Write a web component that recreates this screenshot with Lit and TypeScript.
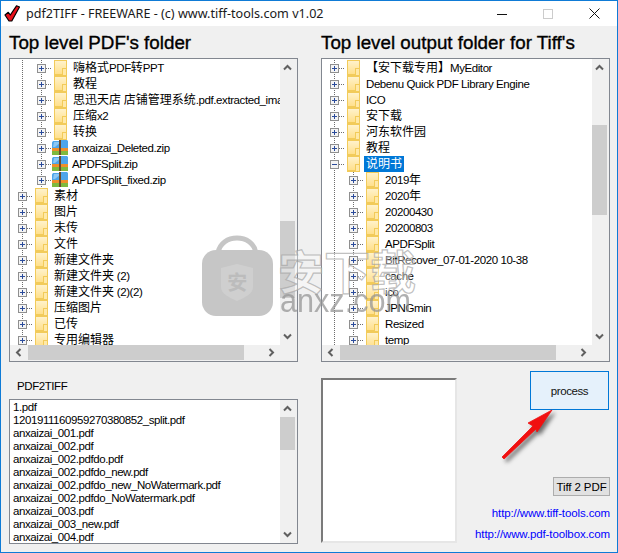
import { LitElement, html, css, svg } from "lit";
import { customElement } from "lit/decorators.js";

type Row = { label: string; level: number; icon?: "folder" | "zip"; open?: boolean; selected?: boolean };

const leftRows: Row[] = [
  { label: "嗨格式PDF转PPT", level: 2 },
  { label: "教程", level: 2 },
  { label: "思迅天店 店铺管理系统.pdf.extracted_images", level: 2 },
  { label: "压缩x2", level: 2 },
  { label: "转换", level: 2 },
  { label: "anxaizai_Deleted.zip", level: 2, icon: "zip" },
  { label: "APDFSplit.zip", level: 2, icon: "zip" },
  { label: "APDFSplit_fixed.zip", level: 2, icon: "zip" },
  { label: "素材", level: 1 },
  { label: "图片", level: 1 },
  { label: "未传", level: 1 },
  { label: "文件", level: 1 },
  { label: "新建文件夹", level: 1 },
  { label: "新建文件夹 (2)", level: 1 },
  { label: "新建文件夹 (2)(2)", level: 1 },
  { label: "压缩图片", level: 1 },
  { label: "已传", level: 1 },
  { label: "专用编辑器", level: 1 },
];

const rightRows: Row[] = [
  { label: "【安下载专用】MyEditor", level: 1 },
  { label: "Debenu Quick PDF Library Engine", level: 1 },
  { label: "ICO", level: 1 },
  { label: "安下载", level: 1 },
  { label: "河东软件园", level: 1 },
  { label: "教程", level: 1 },
  { label: "说明书", level: 1, open: true, selected: true },
  { label: "2019年", level: 2 },
  { label: "2020年", level: 2 },
  { label: "20200430", level: 2 },
  { label: "20200803", level: 2 },
  { label: "APDFSplit", level: 2 },
  { label: "BitRecover_07-01-2020 10-38", level: 2 },
  { label: "cache", level: 2 },
  { label: "ico", level: 2 },
  { label: "JPNGmin", level: 2 },
  { label: "Resized", level: 2 },
  { label: "temp", level: 2 },
];

const files = [
  "1.pdf",
  "1201911160959270380852_split.pdf",
  "anxaizai_001.pdf",
  "anxaizai_002.pdf",
  "anxaizai_002.pdfdo.pdf",
  "anxaizai_002.pdfdo_new.pdf",
  "anxaizai_002.pdfdo_new_NoWatermark.pdf",
  "anxaizai_002.pdfdo_NoWatermark.pdf",
  "anxaizai_003.pdf",
  "anxaizai_003_new.pdf",
  "anxaizai_004.pdf",
];

const chevron = (d: string) => html`<svg class="chev" width="9" height="7" viewBox="0 0 9 7"><path d=${d} fill="none" stroke="#606060" stroke-width="2"/></svg>`;
const chevUp = () => chevron("M1 5.5L4.5 2L8 5.5");
const chevDown = () => chevron("M1 1.5L4.5 5L8 1.5");
const chevLeft = () => html`<svg class="chev" width="7" height="9" viewBox="0 0 7 9"><path d="M5.5 1L2 4.5L5.5 8" fill="none" stroke="#606060" stroke-width="2"/></svg>`;
const chevRight = () => html`<svg class="chev" width="7" height="9" viewBox="0 0 7 9"><path d="M1.5 1L5 4.5L1.5 8" fill="none" stroke="#606060" stroke-width="2"/></svg>`;

const zipIcon = () => html`<svg class="zip" width="16" height="16" viewBox="0 0 16 16">
  ${svg`<path d="M0 2.5L1 1H7L8 0H15L16 1V8H0Z" fill="#4ea5ea"/>
  <path d="M2 2H9L3 7H1Z" fill="#8cc8f5"/>
  <rect x="0" y="8" width="16" height="3" fill="#ef8f2a"/>
  <rect x="0" y="11" width="16" height="4" fill="#7fb93e"/>
  <rect x="7" y="0" width="2" height="15" fill="#6a4a2c"/>`}
</svg>`;

const runs = (text: string) =>
  text.split(/([\u3000-\u9fff\uff00-\uffef]+)/).map((part) =>
    /[\u3000-\u9fff\uff00-\uffef]/.test(part) ? html`<span class="cjk">${part}</span>` : part
  );

@customElement("app-root")
export class AppRoot extends LitElement {
  static styles = css`
    :host { display: block; width: 618px; height: 553px; overflow: hidden; font-family: "Liberation Sans", "Noto Sans CJK SC", sans-serif; font-size: 11.5px; letter-spacing: -0.42px; color: #000; }
    * { box-sizing: border-box; }
    .app { position: relative; width: 618px; height: 553px; border: 1px solid #0f7bd6; display: flex; flex-direction: column; background: #f0f0f0; }
    .title { height: 25px; background: #fff; display: flex; align-items: center; padding-left: 3px; flex: none; }
    .title-text { margin-left: 6px; font-family: "Noto Sans", sans-serif; font-size: 12.6px; letter-spacing: 0; white-space: nowrap; color: #1a1a1a; }
    .controls { margin-left: auto; display: flex; align-items: center; }
    .ctl { width: 46px; height: 25px; display: flex; align-items: center; justify-content: center; }
    .body { flex: 1; display: grid; grid-template-columns: 289px 289px; grid-template-rows: 32px 304px 1fr; column-gap: 23px; padding-left: 8px; }
    h1 { margin: 0; font-weight: 400; font-size: 18.8px; letter-spacing: 0; line-height: 34px; white-space: nowrap; -webkit-text-stroke: 0.35px #000; }
    .box { border: 1px solid #828790; background: #fff; }
    .tree { display: grid; grid-template-columns: 1fr 17px; grid-template-rows: 1fr 16px; height: 304px; background: #f0f0f0; }
    .rows { background: #fff; padding: 1px 0 0 3px; overflow: hidden; min-width: 0; }
    .row { display: flex; height: 16px; white-space: nowrap; }
    .cell { width: 19px; height: 16px; flex: none; position: relative; }
    .cell::before { content: ""; position: absolute; left: 9px; top: 0; bottom: 0; width: 1px; background: repeating-linear-gradient(to bottom, #6d6d6d 0 1px, transparent 1px 2px); }
    .cell.exp::after { content: ""; position: absolute; left: 14px; top: 8px; width: 5px; height: 1px; background: repeating-linear-gradient(to right, #6d6d6d 0 1px, transparent 1px 2px); }
    .sign { position: absolute; left: 5px; top: 4px; width: 9px; height: 9px; z-index: 1; display: block; }
    .folder { width: 13px; height: 16px; margin-left: 3px; flex: none; position: relative; border: 1px solid #f2cb5a; border-bottom-width: 2px; background: linear-gradient(#fff2cb, #ffe08c); }
    .folder::after { content: ""; position: absolute; right: -1px; bottom: -1px; width: 3px; height: 6px; background: #ffe9a8; border: 1px solid #f2cb5a; border-bottom: none; }
    .zip { flex: none; margin: 0 -2px 0 1px; }
    .label { margin-left: 4px; padding: 0 2px; line-height: 16px; height: 16px; }
    .label.sel { background: #0078d7; color: #fff; }
    .cjk { font-size: 12px; letter-spacing: 0; }
    .vbar { display: flex; flex-direction: column; background: #f0f0f0; min-height: 0; }
    .v-arrow { height: 17px; flex: none; display: flex; align-items: center; justify-content: center; padding-right: 2px; }
    .v-track { flex: 1; min-height: 0; }
    .v-thumb { width: 15px; background: #cdcdcd; }
    .hbar { display: flex; background: #f0f0f0; height: 16px; }
    .h-arrow { width: 17px; flex: none; display: flex; align-items: center; justify-content: center; padding-bottom: 1px; }
    .h-track { flex: 1; }
    .h-thumb { height: 15px; background: #cdcdcd; }
    .corner { background: #f0f0f0; }
    .lower-left { padding: 16px 0 0 0; }
    .caption { padding-left: 8px; height: 21px; line-height: 16px; }
    .list { display: grid; grid-template-columns: 1fr 17px; height: 145px; }
    .items { overflow: hidden; padding: 1px 0 0 3px; }
    .item { height: 13px; line-height: 13px; white-space: nowrap; }
    .lower-right { display: flex; padding-top: 16px; }
    .preview { width: 136px; height: 165px; background: #fff; border: 2px solid; border-color: #7a7a7a #e6e6e6 #e6e6e6 #7a7a7a; flex: none; }
    .side { flex: 1; display: flex; flex-direction: column; align-items: flex-end; margin-top: -7px; }
    .process { width: 79px; height: 39px; margin-right: 1px; border: 1px solid #0078d7; background: #e5f1fb; font: inherit; letter-spacing: inherit; color: #111; padding: 0; }
    .t2p { margin-top: 67px; width: 57px; height: 19px; border: 1px solid #adadad; background: #e1e1e1; font: inherit; letter-spacing: -0.1px; padding: 0; color: #000; }
    .link { color: #0000ff; text-decoration: none; white-space: nowrap; line-height: 14px; letter-spacing: -0.12px; }
    .l1 { margin-top: 10px; }
    .l2 { margin-top: 7px; }
    .wm { position: absolute; pointer-events: none; }
    .wm-bag { left: 200px; top: 234px; }
    .wm-cn { left: 277px; top: 241px; font-family: "Noto Sans CJK SC", sans-serif; font-weight: 700; font-size: 46px; letter-spacing: 0; line-height: 54px; color: rgba(255,255,255,0.4); -webkit-text-stroke: 1.2px rgba(165,165,165,0.7); white-space: nowrap; }
    .wm-en { left: 279px; top: 281px; font-size: 34px; letter-spacing: 0; line-height: 36px; color: rgba(145,145,145,0.72); white-space: nowrap; transform: scaleX(0.9); transform-origin: left top; }
    .arrow { position: absolute; left: 490px; top: 400px; filter: drop-shadow(3px 3px 2px rgba(0,0,0,0.55)); }
  `;

  private tree(rows: Row[], thumbTop: number, thumbH: number, hLeft: number, hW: number) {
    return html`<div class="box tree">
      <div class="rows">${rows.map((r) => this.row(r))}</div>
      ${this.vbar(thumbTop, thumbH)}
      <div class="hbar">
        <div class="h-arrow">${chevLeft()}</div>
        <div class="h-track"><div class="h-thumb" style="margin-left:${hLeft}px;width:${hW}px"></div></div>
        <div class="h-arrow">${chevRight()}</div>
      </div>
      <div class="corner"></div>
    </div>`;
  }

  private vbar(top: number, h: number) {
    return html`<div class="vbar">
      <div class="v-arrow">${chevUp()}</div>
      <div class="v-track"><div class="v-thumb" style="margin-top:${top}px;height:${h}px"></div></div>
      <div class="v-arrow">${chevDown()}</div>
    </div>`;
  }

  private row(r: Row) {
    return html`<div class="row">
      ${r.level === 2 ? html`<div class="cell"></div>` : ""}
      <div class="cell exp">
        <svg class="sign" width="9" height="9" viewBox="0 0 9 9">
          <rect x=".5" y=".5" width="8" height="8" fill="#f4f4f4" stroke="#8f8f8f"/>
          <rect x="2" y="4" width="5" height="1" fill="#2a4b9b"/>
          ${r.open ? "" : svg`<rect x="4" y="2" width="1" height="5" fill="#2a4b9b"/>`}
        </svg>
      </div>
      ${r.icon === "zip" ? zipIcon() : html`<div class="folder"></div>`}
      <div class="label ${r.selected ? "sel" : ""}">${runs(r.label)}</div>
    </div>`;
  }

  render() {
    return html`<div class="app">
      <div class="title">
        <svg width="16" height="17" viewBox="0 0 16 17">
          <path d="M1 10L4.3 7.3L6.3 10L12.5 .8L15.5 2L7.8 16H5Z" fill="#e8101a" stroke="#000" stroke-width="1.2" stroke-linejoin="round"/>
        </svg>
        <span class="title-text">pdf2TIFF - FREEWARE - (c) www.tiff-tools.com v1.02</span>
        <div class="controls">
          <div class="ctl"><svg width="10" height="10" viewBox="0 0 10 10"><rect x="0" y="5" width="10" height="1" fill="#111"/></svg></div>
          <div class="ctl"><svg width="10" height="10" viewBox="0 0 10 10"><rect x=".5" y=".5" width="9" height="9" fill="none" stroke="#cccccc"/></svg></div>
          <div class="ctl"><svg width="11" height="11" viewBox="0 0 11 11"><path d="M.5 .5L10.5 10.5M10.5 .5L.5 10.5" stroke="#111" fill="none"/></svg></div>
        </div>
      </div>
      <div class="body">
        <h1>Top level PDF's folder</h1>
        <h1>Top level output folder for Tiff's</h1>
        ${this.tree(leftRows, 145, 77, 1, 216)}
        ${this.tree(rightRows, 49, 90, 1, 216)}
        <div class="lower-left">
          <div class="caption">PDF2TIFF</div>
          <div class="box list">
            <div class="items">${files.map((f) => html`<div class="item">${f}</div>`)}</div>
            ${this.vbar(0, 33)}
          </div>
        </div>
        <div class="lower-right">
          <div class="preview"></div>
          <div class="side">
            <button class="process">process</button>
            <button class="t2p">Tiff 2 PDF</button>
            <a class="link l1" href="#">http://www.tiff-tools.com</a>
            <a class="link l2" href="#">http://www.pdf-toolbox.com</a>
          </div>
        </div>
      </div>
      <svg class="wm wm-bag" width="74" height="82" viewBox="0 0 74 82">
        <path d="M17 18C20 -2 52 -2 55 18" fill="none" stroke="#c6c6c6" stroke-width="5"/>
        <rect x="1" y="15" width="71" height="66" rx="14" fill="#c6c6c6"/>
        <path d="M20 33L36 29L52 33V52C52 59 43 63 36 66C29 63 20 59 20 52Z" fill="#cfcfcf"/>
        <text x="36" y="55" text-anchor="middle" font-family="Noto Sans CJK SC" font-size="20" font-weight="700" fill="#bcbcbc">安</text>
      </svg>
      <div class="wm wm-cn">安下载</div>
      <div class="wm wm-en">anxz.com</div>
      <svg class="arrow" width="70" height="65" viewBox="0 0 70 65">
        <path d="M61 9L37 22L42 25L11 56L13 58L45 28L46 31Z" fill="#f01010" stroke="#f01010" stroke-width=".8" stroke-linejoin="round"/>
      </svg>
    </div>`;
  }
}
